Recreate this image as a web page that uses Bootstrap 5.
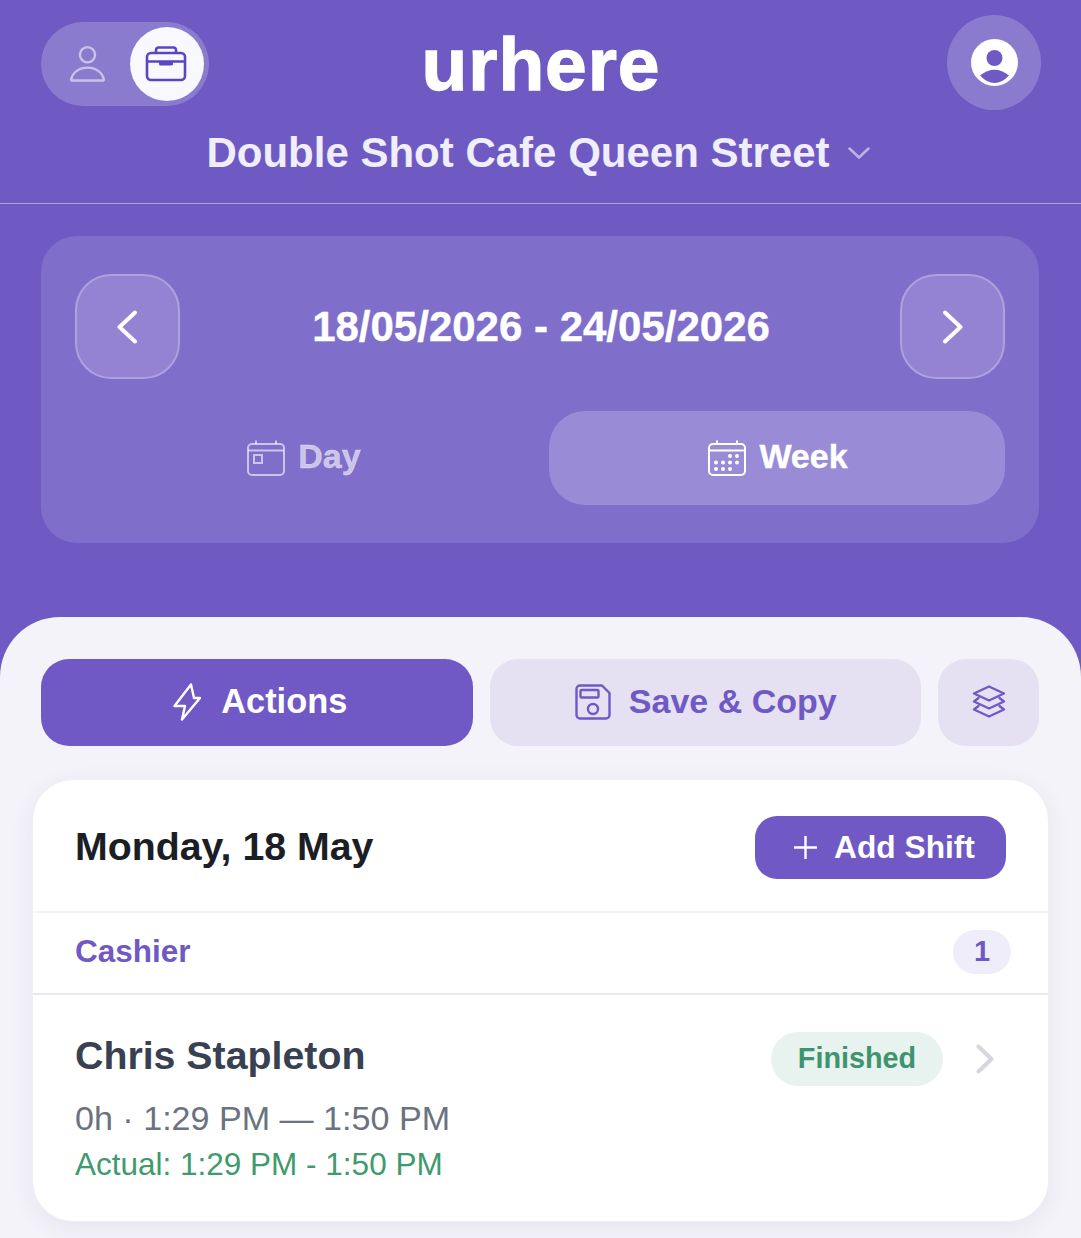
<!DOCTYPE html>
<html lang="en">
<head>
<meta charset="utf-8">
<title>urhere</title>
<link href="https://cdn.jsdelivr.net/npm/bootstrap@5.3.0/dist/css/bootstrap.min.css" rel="stylesheet">
<style>
html,body{height:100%}
body{background:#6f5ac4;font-family:"Liberation Sans",Arial,sans-serif;overflow:hidden}
svg{display:block;flex:none}
.top-bar{height:204px;border-bottom:1px solid rgba(255,255,255,.45);padding:15px 40px 0 41px}
.top-grid{display:grid;grid-template-columns:1fr auto 1fr;align-items:center;height:95px}
.mode-pill{width:168px;height:84px;padding:5px;gap:10px;border-radius:42px;background:rgba(255,255,255,.2);margin-top:2px}
.mode-slot{width:74px;height:74px;border-radius:50%}
.mode-slot.on{background:#f9f8fe}
.ico-person{margin-left:8px}
.ico-case{margin-right:2px}
.brand{font-size:75px;line-height:1;font-weight:700;color:#fff;letter-spacing:.9px;margin-top:4px;-webkit-text-stroke:1.3px #fff}
.avatar-btn{width:94px;height:95px;border-radius:50%;background:rgba(255,255,255,.2)}
.place-row{gap:18px;margin-top:19px;padding-right:6px}
.place-name{font-size:42px;line-height:48px;font-weight:700;color:#f0eefa}
.date-panel{margin:32px 42px 0 41px;height:307px;padding:38px 34px;border-radius:36px;background:rgba(255,255,255,.12)}
.arrow-btn{width:104.5px;height:105px;border-radius:36px;background:rgba(255,255,255,.15);border:2px solid rgba(255,255,255,.25)}
.date-label,.seg-btn{font-weight:700;-webkit-text-stroke:.4px currentColor}
.date-label{font-size:42px;color:#fff;padding-left:2px}
.seg-row{gap:18px;margin-top:32px}
.seg-btn{flex:1 1 0;height:94px;gap:13px;border-radius:36px;font-size:34px;color:rgba(255,255,255,.62)}
.seg-btn.on{background:rgba(255,255,255,.2);color:#fff}
.seg-btn svg{margin-left:2px}
.seg-text{margin-top:-4px}
.sheet{margin-top:74px;height:calc(100vh - 617px);padding:42px 33px 0;border-radius:60px 60px 0 0;background:#f4f3f9}
.tab-row{gap:17px;padding:0 9px 0 8px}
.tab-btn{flex:1 1 0;height:87px;gap:18px;border-radius:28px;font-size:34px;font-weight:700;background:#e5e1f2;color:#7059c5;padding-bottom:2px}
.tab-btn.on{background:#7059c5;color:#fff;font-size:34.4px;gap:20px}
.tab-btn.narrow{flex:0 0 101px}
.ico-bolt{margin-left:7px}
.ico-save{margin-left:1px}
.day-card{margin-top:34px;height:441px;border-radius:40px;background:#fff;box-shadow:0 0 0 1px #efeef5,0 6px 24px rgba(60,50,110,.08);overflow:hidden}
.day-head{height:133px;padding:4px 42px 0 42px;border-bottom:2px solid #f3f2f7}
.day-title{font-size:39.3px;font-weight:700;color:#1c1e26;margin-top:-2px}
.add-btn{width:251px;height:63px;gap:17px;padding-left:8px;border-radius:22px;background:#7059c5;color:#fff;font-size:31.7px;font-weight:700}
.role-row{height:82px;padding:0 37px 2px 42px;border-bottom:2px solid #e9e8ef}
.role-name{font-size:31.5px;font-weight:700;color:#7059c5}
.count-chip{width:58px;height:44px;border-radius:22px;background:#f0edfb;color:#7059c5;font-size:29px;font-weight:700}
.shift-row{padding:37px 54px 0 42px}
.person{font-size:39.3px;line-height:50px;font-weight:700;color:#374151;margin-top:-2px}
.sched{font-size:34.1px;line-height:44px;color:#6b7280;margin-top:16px}
.actual{font-size:31.5px;line-height:42px;color:#3f9a6e;margin-top:3px}
.state-chip{width:172px;height:54px;border-radius:27px;background:#e8f2ee;color:#3f9470;font-size:28.8px;font-weight:700}
.state-box{gap:33px}
.ico-next{margin-top:-1px}
</style>
</head>
<body>
<header class="top-bar">
  <div class="top-grid">
    <div class="d-flex mode-pill">
      <div class="mode-slot d-flex align-items-center justify-content-center">
        <svg class="ico-person" width="35" height="38" viewBox="0 0 36 38" fill="none" stroke="rgba(255,255,255,.55)" stroke-width="2.4"><circle cx="18" cy="9.5" r="7.8"/><path d="M2 36c-.6 0-.9-.4-.8-1C2.600 27.500 9.500 22.800 18 22.800S33.400 27.500 34.800 35c.1.600-.2 1-.8 1Z"/></svg>
      </div>
      <div class="mode-slot on d-flex align-items-center justify-content-center">
        <svg class="ico-case" width="42" height="36" viewBox="0 0 42 36" fill="none" stroke="#5b45c0" stroke-width="2.600"><rect x="2" y="7" width="38" height="27" rx="4"/><path d="M11 7V4a2.500 2.500 0 0 1 2.500-2.500h15A2.500 2.500 0 0 1 31 4v3"/><path d="M2 15.500h38"/><path d="M14 15.500h14v2.500a1.500 1.500 0 0 1-1.500 1.500h-11A1.500 1.500 0 0 1 14 18Z" fill="#5b45c0" stroke="none"/></svg>
      </div>
    </div>
    <div class="brand text-center">urhere</div>
    <div class="d-flex justify-content-end">
      <div class="avatar-btn d-flex align-items-center justify-content-center">
        <svg width="47" height="47" viewBox="0 0 47 47"><circle cx="23.500" cy="23.500" r="23.500" fill="#fff"/><circle cx="23.500" cy="19" r="8" fill="#6f5ac4"/><path d="M9 36.500Q23.500 25 38 36.500Q31 44 23.500 44Q16 44 9 36.500Z" fill="#6f5ac4"/></svg>
      </div>
    </div>
  </div>
  <div class="place-row d-flex align-items-center justify-content-center">
    <span class="place-name">Double Shot Cafe Queen Street</span>
    <svg width="22" height="12" viewBox="0 0 22 12" fill="none" stroke="rgba(255,255,255,.55)" stroke-width="2.500" stroke-linecap="round" stroke-linejoin="round"><path d="M1.500 1.500 11 10.500 20.500 1.500"/></svg>
  </div>
</header>

<section class="date-panel">
  <div class="d-flex align-items-center justify-content-between">
    <div class="arrow-btn d-flex align-items-center justify-content-center">
      <svg width="20" height="34" viewBox="0 0 20 34" fill="none" stroke="#fff" stroke-width="4" stroke-linecap="round" stroke-linejoin="round"><path d="M18 2.500 2.500 17 18 31.500"/></svg>
    </div>
    <div class="date-label">18/05/2026 - 24/05/2026</div>
    <div class="arrow-btn d-flex align-items-center justify-content-center">
      <svg width="20" height="34" viewBox="0 0 20 34" fill="none" stroke="#fff" stroke-width="4" stroke-linecap="round" stroke-linejoin="round"><path d="M2 2.500 17.500 17 2 31.500"/></svg>
    </div>
  </div>
  <div class="seg-row d-flex">
    <div class="seg-btn d-flex align-items-center justify-content-center">
      <svg width="38" height="36" viewBox="0 0 38 36" fill="none" stroke="rgba(255,255,255,.6)" stroke-width="2"><rect x="1" y="4" width="36" height="31" rx="4"/><path d="M1 10.500h36M9 .5V4M29 .5V4"/><rect x="7" y="15" width="8" height="8"/></svg>
      <span class="seg-text">Day</span>
    </div>
    <div class="seg-btn on d-flex align-items-center justify-content-center">
      <svg width="38" height="36" viewBox="0 0 38 36" fill="none" stroke="#fff" stroke-width="2"><rect x="1" y="4" width="36" height="31" rx="4"/><path d="M1 10.500h36M9 .5V4M29 .5V4"/><g fill="#fff" stroke="none"><circle cx="22" cy="16" r="2"/><circle cx="29" cy="16" r="2"/><circle cx="8" cy="22.500" r="2"/><circle cx="15" cy="22.500" r="2"/><circle cx="22" cy="22.500" r="2"/><circle cx="29" cy="22.500" r="2"/><circle cx="8" cy="29" r="2"/><circle cx="15" cy="29" r="2"/><circle cx="22" cy="29" r="2"/></g></svg>
      <span class="seg-text">Week</span>
    </div>
  </div>
</section>

<main class="sheet">
  <div class="tab-row d-flex">
    <div class="tab-btn on d-flex align-items-center justify-content-center">
      <svg class="ico-bolt" width="28" height="38" viewBox="0 0 28 38" fill="none" stroke="#fff" stroke-width="2.400" stroke-linejoin="round"><path d="M18 1.500 1.500 23H12L9 36.500 27 15H21Z"/></svg>
      <span>Actions</span>
    </div>
    <div class="tab-btn d-flex align-items-center justify-content-center">
      <svg class="ico-save" width="36" height="36" viewBox="0 0 36 36" fill="none" stroke="#7059c5" stroke-width="2.400" stroke-linejoin="round"><path d="M5 1.500H27L34.500 9V31a3.500 3.500 0 0 1-3.500 3.500H5A3.500 3.500 0 0 1 1.500 31V5A3.500 3.500 0 0 1 5 1.500Z"/><rect x="5.500" y="6" width="18" height="7.500" rx="1"/><circle cx="18" cy="25" r="5"/></svg>
      <span>Save &amp; Copy</span>
    </div>
    <div class="tab-btn narrow d-flex align-items-center justify-content-center">
      <svg width="34" height="34" viewBox="0 0 34 34" fill="none" stroke="#7059c5" stroke-width="2.400" stroke-linejoin="round" stroke-linecap="round"><path d="M17 1.500 32 8.500 17 15.500 2 8.500Z"/><path d="M6.500 13 2 16.500 17 23.500 32 16.500 27.500 13"/><path d="M6.500 21 2 24.500 17 31.500 32 24.500 27.500 21"/></svg>
    </div>
  </div>

  <article class="day-card">
    <div class="day-head d-flex align-items-center justify-content-between">
      <div class="day-title">Monday, 18 May</div>
      <div class="add-btn d-flex align-items-center justify-content-center">
        <svg width="23" height="23" viewBox="0 0 23 23" stroke="#fff" stroke-width="2.400" fill="none"><path d="M11.500 0V23M0 11.500H23"/></svg>
        <span>Add Shift</span>
      </div>
    </div>
    <div class="role-row d-flex align-items-center justify-content-between">
      <div class="role-name">Cashier</div>
      <div class="count-chip d-flex align-items-center justify-content-center">1</div>
    </div>
    <div class="shift-row d-flex justify-content-between align-items-start">
      <div>
        <div class="person">Chris Stapleton</div>
        <div class="sched">0h · 1:29 PM — 1:50 PM</div>
        <div class="actual">Actual: 1:29 PM - 1:50 PM</div>
      </div>
      <div class="state-box d-flex align-items-center">
        <div class="state-chip d-flex align-items-center justify-content-center">Finished</div>
        <svg class="ico-next" width="18" height="30" viewBox="0 0 18 30" fill="none" stroke="#d5d6de" stroke-width="4" stroke-linecap="round" stroke-linejoin="round"><path d="M2.500 2.500 15.500 15 2.500 27.500"/></svg>
      </div>
    </div>
  </article>
</main>
<script src="https://cdn.jsdelivr.net/npm/bootstrap@5.3.0/dist/js/bootstrap.bundle.min.js"></script>
</body>
</html>
